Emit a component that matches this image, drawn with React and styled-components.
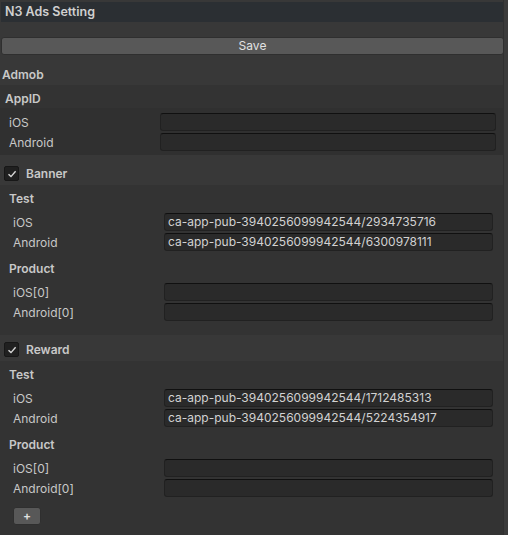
import React from 'react';
import styled, { createGlobalStyle } from 'styled-components';

const GlobalStyle = createGlobalStyle`
  html, body {
    margin: 0;
    padding: 0;
    background: #383838;
  }
  body {
    font-family: Inter, "Noto Sans", "Liberation Sans", sans-serif;
    font-size: 12px;
    color: #c8c8c8;
  }
`;

const Window = styled.div`
  width: 508px;
  height: 535px;
  display: flex;
  overflow: hidden;
  background: #383838;
`;

const Main = styled.div`
  width: 503px;
  display: flex;
  flex-direction: column;
`;

const ScrollStrip = styled.div`
  flex: 1;
  background: #3b3b3b;
  border-left: 1px solid #303030;
`;

const TitleBar = styled.div`
  margin: 2px 0 0 1px;
  height: 21px;
  background: #2b2f33;
  display: flex;
  align-items: center;
  padding-left: 4px;
  font-size: 12.5px;
  font-weight: 600;
  color: #d0d0d0;
`;

const Button = styled.button`
  height: 18px;
  padding: 0;
  border: 1px solid #2f2f2f;
  border-radius: 3px;
  background: #585858;
  color: #e2e2e2;
  font-family: inherit;
  font-size: 12px;
  line-height: 16px;
`;

const SaveButton = styled(Button)`
  margin: 15px 0 0 1px;
  width: 503px;
`;

const AddButton = styled(Button)`
  width: 28px;
  margin: 6px 0 0 13px;
  font-weight: 600;
`;

const SectionTitle = styled.div`
  height: 20px;
  display: flex;
  align-items: center;
  margin: ${p => p.top || 0}px 0 2px ${p => p.left || 0}px;
  font-weight: 600;
`;

const Box = styled.div`
  background: #333333;
  padding: 0 ${p => (p.indent ? 10 : 7)}px ${p => p.bottom || 0}px 0;
`;

const SubHeader = styled.div`
  height: 20px;
  margin-top: 3px;
  padding-left: ${p => (p.indent ? 9 : 5)}px;
  display: flex;
  align-items: center;
  font-weight: 600;
`;

const Rows = styled.div`
  display: flex;
  flex-direction: column;
  gap: 2px;
  padding: 5px 0 4px ${p => (p.indent ? 13 : 9)}px;
  background: ${p => (p.shaded ? '#303030' : 'transparent')};
  margin-right: ${p => (p.shaded ? -7 : 0)}px;
  padding-right: ${p => (p.shaded ? 7 : 0)}px;
`;

const Row = styled.div`
  display: flex;
  align-items: center;
  height: 18px;
`;

const Label = styled.div`
  width: 151px;
  flex-shrink: 0;
`;

const Field = styled.div`
  flex: 1;
  height: 16px;
  border: 1px solid #212121;
  border-top-color: #101010;
  border-radius: 3px;
  background: #2a2a2a;
  color: #d2d2d2;
  padding-left: 3px;
  line-height: 16px;
  white-space: nowrap;
  overflow: hidden;
`;

const ToggleRow = styled.div`
  height: 20px;
  display: flex;
  align-items: center;
  gap: 7px;
  margin: ${p => p.top}px 0 2px 4px;
  font-weight: 600;
`;

const CheckBox = styled.div`
  width: 13px;
  height: 13px;
  border: 1px solid #171717;
  border-radius: 2px;
  background: #202020;
  display: flex;
  align-items: center;
  justify-content: center;
`;

const Check = () => (
  <CheckBox>
    <svg width="10" height="10" viewBox="0 0 10 10">
      <polyline points="1.5,5.2 4,7.6 8.6,2.2" fill="none" stroke="#d8d8d8" strokeWidth="1.4" />
    </svg>
  </CheckBox>
);

const FieldRows = ({ rows, indent, shaded }) => (
  <Rows indent={indent} shaded={shaded}>
    {rows.map(([label, value]) => (
      <Row key={label}>
        <Label>{label}</Label>
        <Field>{value}</Field>
      </Row>
    ))}
  </Rows>
);

const AdUnit = ({ test, bottom, children }) => (
  <Box indent bottom={bottom}>
    <SubHeader indent>Test</SubHeader>
    <FieldRows indent rows={[['iOS', test[0]], ['Android', test[1]]]} />
    <SubHeader indent>Product</SubHeader>
    <FieldRows indent rows={[['iOS[0]', ''], ['Android[0]', '']]} />
    {children}
  </Box>
);

export default function App() {
  return (
    <>
      <GlobalStyle />
      <Window>
        <Main>
          <TitleBar>N3 Ads Setting</TitleBar>
          <SaveButton>Save</SaveButton>
          <SectionTitle top={10} left={2}>Admob</SectionTitle>
          <Box>
            <SubHeader>AppID</SubHeader>
            <FieldRows shaded rows={[['iOS', ''], ['Android', '']]} />
          </Box>

          <ToggleRow top={9}>
            <Check />
            Banner
          </ToggleRow>
          <AdUnit
            bottom={10}
            test={['ca-app-pub-3940256099942544/2934735716', 'ca-app-pub-3940256099942544/6300978111']}
          />

          <ToggleRow top={5}>
            <Check />
            Reward
          </ToggleRow>
          <AdUnit
            bottom={10}
            test={['ca-app-pub-3940256099942544/1712485313', 'ca-app-pub-3940256099942544/5224354917']}
          >
            <AddButton>+</AddButton>
          </AdUnit>
        </Main>
        <ScrollStrip />
      </Window>
    </>
  );
}
